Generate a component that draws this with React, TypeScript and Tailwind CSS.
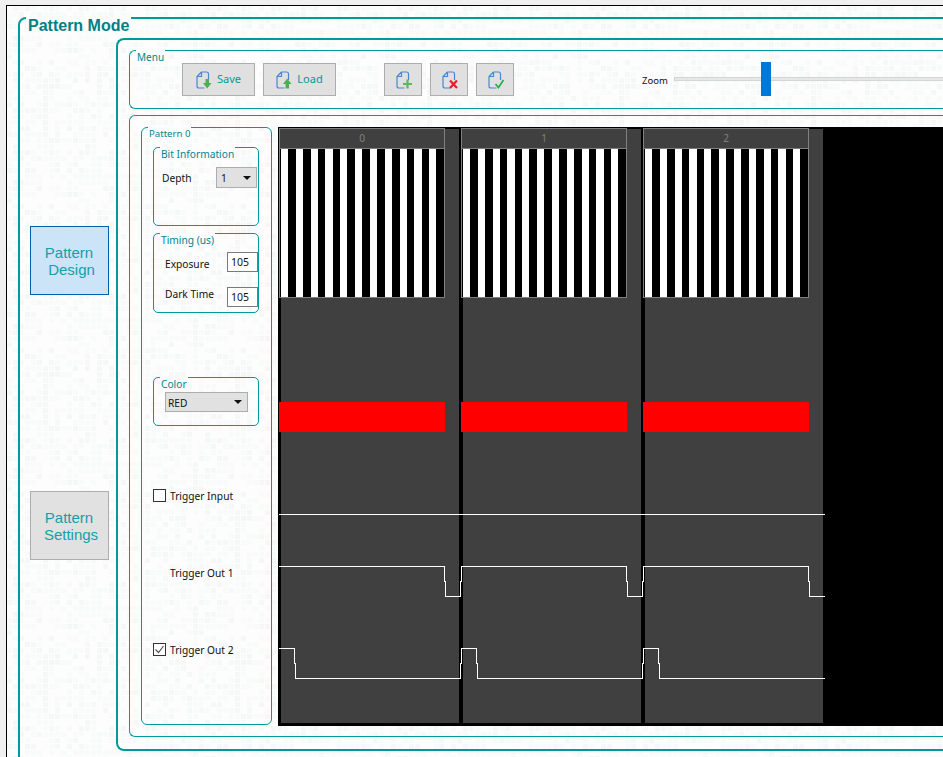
import type { ReactNode } from 'react'

// Faint mosaic behind the whole window, same cells every render
function Mosaic() {
  const cells: ReactNode[] = []
  let seed = 7
  for (let y = 0; y < 24; y++) {
    for (let x = 0; x < 32; x++) {
      seed = (seed * 1103 + 12345) % 65536
      const v = seed % 10
      if (v < 6) {
        cells.push(
          <rect key={`${x}-${y}`} x={x * 6} y={y * 6} width={5} height={5} fill={v < 2 ? '#f6f7f7' : '#f9fafa'} />
        )
      }
    }
  }
  return (
    <svg className="absolute inset-0 pointer-events-none" width="960" height="780">
      <defs>
        <pattern id="mosaic" width="192" height="144" patternUnits="userSpaceOnUse">
          {cells}
        </pattern>
      </defs>
      <rect width="960" height="780" fill="url(#mosaic)" />
    </svg>
  )
}

function GroupTitle({ children, className }: { children: ReactNode; className: string }) {
  return <span className={`absolute whitespace-nowrap bg-[#fcfcfc] text-[#00858f] ${className}`}>{children}</span>
}

function DocIcon({ children }: { children: ReactNode }) {
  return (
    <svg width="16" height="18" viewBox="0 0 16 18" fill="none">
      <path
        d="M5.5 1 H10.5 Q12.5 1 12.5 3 V9 M5.5 1 L1 5.5 V15 Q1 17 3 17 H8.5 M5.5 1 V5.5 H1"
        stroke="#4a86cf"
        strokeWidth="1.2"
      />
      {children}
    </svg>
  )
}

function TextButton({ label, icon }: { label: string; icon: ReactNode }) {
  return (
    <div className="flex h-[33px] w-[73px] shrink-0 items-center justify-center gap-[5px] border border-[#adadad] bg-[#e0e0e0] text-[11px] text-[#009a9a]">
      {icon}
      <span>{label}</span>
    </div>
  )
}

function IconButton({ icon }: { icon: ReactNode }) {
  return (
    <div className="flex h-[33px] w-[38px] shrink-0 items-center justify-center border border-[#adadad] bg-[#e0e0e0] pl-[2px]">
      {icon}
    </div>
  )
}

function Caret() {
  return (
    <svg width="8" height="4" viewBox="0 0 8 4">
      <path d="M0 0 H8 L4 4 Z" fill="#111" />
    </svg>
  )
}

function NumberBox() {
  return (
    <div className="flex h-[20px] w-[31px] items-center border border-[#7a7a7a] bg-white pl-[3px] text-[10.5px] text-[#111]">
      105
    </div>
  )
}

function CheckBox({ checked }: { checked?: boolean }) {
  return (
    <div className="flex h-[13px] w-[13px] items-center justify-center border border-[#333] bg-white">
      {checked && (
        <svg width="11" height="11" viewBox="0 0 11 11" fill="none">
          <path d="M1.5 5.5 L4.5 8.5 L9.5 2" stroke="#555" strokeWidth="1.2" />
        </svg>
      )}
    </div>
  )
}

const STRIPES = Array.from({ length: 11 }, (_, i) => i)

function PatternColumn({ index }: { index: number }) {
  return (
    <div className="h-[594px] w-[178px] bg-[#404040]">
      <div className="relative z-10 ml-[-2px] mt-[-1px] h-[170px] w-[166px] border border-[#808080] bg-black">
        <div className="flex h-[20px] items-center justify-center border-b border-[#808080] bg-[#404040] text-[10px] text-[#808080]">
          {index}
        </div>
        <div className="flex h-[148px] pl-[1px]">
          {STRIPES.map((i) => (
            <div key={i} className="mr-[7.6px] h-full w-[7.6px] bg-white" />
          ))}
        </div>
      </div>
      <div className="relative z-10 ml-[-2px] mt-[104px] h-[30px] w-[166px] bg-[#ff0000]" />
    </div>
  )
}

// Timing traces, drawn in page coordinates and shifted to the canvas origin
function Traces() {
  const periods = [0, 182, 364]
  const out1 = periods
    .map((p) => `M${279 + p} 566.5 H${444.5 + p} V581.5 H${445.5 + p} V596.5 H${460.5 + p} ${p < 364 ? `V581.5 H${461.5 + p} V566.5` : 'H825'}`)
    .join(' ')
  const out2 = periods
    .map((p) => `M${279 + p} 648.5 H${294.5 + p} V663.5 H${295.5 + p} V678.5 H${p < 364 ? 460.5 + p : 825} ${p < 364 ? `V663.5 H${461.5 + p} V648.5` : ''}`)
    .join(' ')
  return (
    <svg className="absolute left-0 top-0 z-20" width="560" height="599" fill="none" shapeRendering="crispEdges">
      <g transform="translate(-278 -127)" stroke="#ffffff" strokeWidth="1">
        <path d="M279 514.5 H825" />
        <path d={out1} />
        <path d={out2} />
      </g>
    </svg>
  )
}

export default function App() {
  return (
    <div className="h-[757px] w-[943px] overflow-hidden bg-[#f0f0f0] pl-[6px] pt-[5px] font-['Noto_Sans',sans-serif]">
      <div className="relative h-[780px] w-[960px] border border-black bg-[#fdfdfd] pl-[11px] pt-[11px]">
        <Mosaic />

        {/* Pattern Mode */}
        <div className="relative h-[760px] w-[960px] rounded-tl-lg border-2 border-[#009a9a] pt-[19px]">
          <span className="absolute left-[6px] top-[-2px] whitespace-nowrap bg-[#fcfcfc] px-[2px] font-['Liberation_Sans',sans-serif] text-[16px] font-bold leading-[18px] text-[#007f86]">
            Pattern Mode
          </span>

          <div className="flex">
            <div className="flex w-[96px] shrink-0 flex-col pl-[10px] pt-[188px] font-['Liberation_Sans',sans-serif] text-[15px] leading-[17px] text-[#13a0a8]">
              <div className="flex h-[69px] w-[79px] flex-col items-center justify-center border border-[#0060a8] bg-[#cce4f7]">
                <span className="mr-[1px]">Pattern</span>
                <span className="ml-[4px]">Design</span>
              </div>
              <div className="mt-[196px] flex h-[69px] w-[79px] flex-col items-center justify-center border border-[#adadad] bg-[#e1e1e1]">
                <span className="mr-[1px]">Pattern</span>
                <span className="ml-[3px]">Settings</span>
              </div>
            </div>

            <div className="h-[713px] w-[830px] shrink-0 rounded-l-lg border-2 border-r-0 border-[#009a9a] pl-[11px] pt-[10px]">
              {/* Menu */}
              <div className="relative h-[59px] w-[815px] rounded-l-md border border-r-0 border-[#009a9a]">
                <GroupTitle className="left-[6px] top-[-1px] px-[1px] text-[10px] leading-[14px]">Menu</GroupTitle>
                <div className="flex pl-[52px] pt-[12px]">
                  <TextButton
                    label="Save"
                    icon={
                      <DocIcon>
                        <path d="M9.5 8 H13 V12 H15.5 L11.2 17.5 L7 12 H9.5 Z" fill="#4caf50" />
                      </DocIcon>
                    }
                  />
                  <div className="ml-[8px] shrink-0">
                    <TextButton
                      label="Load"
                      icon={
                        <DocIcon>
                          <path d="M9.5 17.5 H13 V13 H15.5 L11.2 7.5 L7 13 H9.5 Z" fill="#4caf50" />
                        </DocIcon>
                      }
                    />
                  </div>
                  <div className="ml-[48px] flex shrink-0 gap-[8px]">
                    <IconButton
                      icon={
                        <DocIcon>
                          <path d="M7 13 H16 M11.5 8.5 V17.5" stroke="#5cb85c" strokeWidth="2.2" />
                        </DocIcon>
                      }
                    />
                    <IconButton
                      icon={
                        <DocIcon>
                          <path d="M8 9.5 L15 17 M15 9.5 L8 17" stroke="#ee1c25" strokeWidth="2.2" />
                        </DocIcon>
                      }
                    />
                    <IconButton
                      icon={
                        <DocIcon>
                          <path d="M7.5 13 L10.5 16.5 L15.5 9" stroke="#22b14c" strokeWidth="1.8" />
                        </DocIcon>
                      }
                    />
                  </div>
                  <div className="ml-[128px] flex h-[33px] w-[26px] shrink-0 items-center pt-[4px] text-[9.5px] text-[#111]">Zoom</div>
                  <div className="relative ml-[6px] mt-[14px] h-[4px] w-[300px] shrink-0 border border-[#d4d6d4] bg-[#e6e7e6]">
                    <div className="absolute left-[86px] top-[-16px] h-[34px] w-[10px] bg-[#0078d7]" />
                  </div>
                </div>
              </div>

              {/* Pattern area */}
              <div className="mt-[6px] flex h-[622px] w-[815px] gap-[6px] rounded-l-md border border-r-0 border-[#009a9a] pl-[11px] pt-[11px]">
                <div className="relative h-[598px] w-[131px] shrink-0 rounded-md border border-[#009a9a] pl-[11px] pt-[19px] text-[10.2px] leading-[14px] text-[#111]">
                  <GroupTitle className="left-[6px] top-[-1px] px-[1px] text-[9.6px] leading-[14px]">Pattern 0</GroupTitle>

                  <div className="relative h-[79px] w-[106px] rounded-[5px] border border-[#009a9a]">
                    <GroupTitle className="left-[6px] top-[-1px] px-[1px] leading-[14px]">Bit Information</GroupTitle>
                    <div className="flex items-start pl-[8px] pt-[19px]">
                      <span className="mt-[4px] w-[54px]">Depth</span>
                      <div className="flex h-[21px] w-[41px] items-center justify-between border border-[#adadad] bg-[#e1e1e1] pl-[4px] pr-[5px]">
                        <span>1</span>
                        <Caret />
                      </div>
                    </div>
                  </div>

                  <div className="relative mt-[7px] h-[80px] w-[106px] rounded-[5px] border border-[#009a9a]">
                    <GroupTitle className="left-[6px] top-[-1px] px-[1px] leading-[14px]">Timing (us)</GroupTitle>
                    <div className="flex items-start pl-[11px] pt-[18px]">
                      <span className="mt-[5px] w-[62px]">Exposure</span>
                      <NumberBox />
                    </div>
                    <div className="mt-[15px] flex items-start pl-[11px]">
                      <span className="w-[62px]">Dark Time</span>
                      <NumberBox />
                    </div>
                  </div>

                  <div className="relative mt-[64px] h-[49px] w-[106px] rounded-[5px] border border-[#009a9a] pl-[11px] pt-[14px]">
                    <GroupTitle className="left-[6px] top-[-1px] px-[1px] leading-[14px]">Color</GroupTitle>
                    <div className="flex h-[20px] w-[83px] items-center justify-between border border-[#adadad] bg-[#e1e1e1] pl-[2px] pr-[5px]">
                      <span className="mt-[2px]">RED</span>
                      <Caret />
                    </div>
                  </div>

                  <div className="mt-[63px] flex h-[13px] items-center gap-[4px]">
                    <CheckBox />
                    <span>Trigger Input</span>
                  </div>
                  <div className="mt-[64px] flex h-[13px] items-center pl-[17px]">
                    <span>Trigger Out 1</span>
                  </div>
                  <div className="mt-[64px] flex h-[13px] items-center gap-[4px]">
                    <CheckBox checked />
                    <span>Trigger Out 2</span>
                  </div>
                </div>

                {/* Timeline */}
                <div className="relative flex h-[599px] w-[670px] shrink-0 gap-[4px] bg-black pl-[3px] pt-[2px]">
                  <PatternColumn index={0} />
                  <PatternColumn index={1} />
                  <PatternColumn index={2} />
                  <Traces />
                </div>
              </div>
            </div>
          </div>
        </div>
      </div>
    </div>
  )
}
